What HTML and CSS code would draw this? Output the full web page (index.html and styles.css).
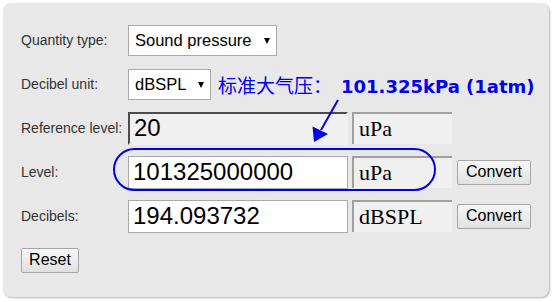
FILE: index.html
```html
<!DOCTYPE html>
<html lang="en">
<head>
    <meta charset="UTF-8">
    <meta name="viewport" content="width=device-width, initial-scale=1.0">
    <link rel="stylesheet" href="styles.css">
</head>
<body>

    <div class="panel">
        <div class="row">
            <label class="label">Quantity type:</label>
            <span class="select-wrap quantity"><select class="select"><option>Sound pressure</option></select></span>
        </div>
        <div class="row">
            <label class="label">Decibel unit:</label>
            <span class="select-wrap unit-select"><select class="select"><option>dBSPL</option></select></span>
            <span class="note">标准大气压：<b class="note-value">101.325kPa (1atm)</b></span>
        </div>
        <div class="row">
            <label class="label">Reference level:</label>
            <input class="field readonly" value="20" readonly>
            <span class="unit">uPa</span>
        </div>
        <div class="row">
            <label class="label">Level:</label>
            <input class="field" value="101325000000">
            <span class="unit">uPa</span>
            <button class="btn convert">Convert</button>
        </div>
        <div class="row">
            <label class="label">Decibels:</label>
            <input class="field" value="194.093732">
            <span class="unit">dBSPL</span>
            <button class="btn convert">Convert</button>
        </div>
        <div class="row">
            <button class="btn reset">Reset</button>
        </div>

        <!-- hand-drawn annotation on top of the form -->
        <svg class="annotation" viewBox="3 3 553 302" width="553" height="302">
            <rect x="117" y="152" width="321" height="41" rx="20.5" fill="none" stroke="#0000f0" stroke-width="2"/>
            <line x1="341" y1="103" x2="324" y2="133" stroke="#0000f0" stroke-width="2"/>
            <polygon points="317,145 315.5,129.5 331,137" fill="#0000f0"/>
        </svg>
    </div>

</body>
</html>
```

FILE: styles.css
```css
body {
    margin: 0;
    padding: 0;
    background-color: #fff;
    font-family: "Liberation Sans", Arial, sans-serif;
}

.panel {
    position: relative;
    margin: 3px;
    width: 546px;
    height: 294px;
    box-sizing: border-box;
    padding: 15px 0 0 18px;
    background-color: #e8e8e8;
    border-radius: 8px;
    box-shadow: 1px 1px 2px rgba(0, 0, 0, 0.3);
}

.row {
    display: flex;
    align-items: center;
    height: 44px;
}

.label {
    width: 107px;
    flex-shrink: 0;
    font-size: 14px;
    color: #333;
}

.select-wrap {
    position: relative;
    display: inline-block;
    height: 31px;
}

.select-wrap::after {
    content: "";
    position: absolute;
    right: 7px;
    top: 13px;
    border-left: 3.5px solid transparent;
    border-right: 3.5px solid transparent;
    border-top: 6px solid #000;
    pointer-events: none;
}

.select {
    -webkit-appearance: none;
    appearance: none;
    width: 100%;
    height: 31px;
    margin: 0;
    padding: 0 0 0 6px;
    border: 1px solid #a9a9a9;
    border-radius: 0;
    background-color: #fff;
    font-family: "Liberation Sans", Arial, sans-serif;
    font-size: 16.5px;
    color: #000;
}

.quantity {
    width: 149px;
}

.unit-select {
    width: 83px;
}

.note {
    margin-left: 7px;
    color: #0000f0;
    font-family: "Noto Sans CJK SC", sans-serif;
    font-size: 19px;
    white-space: nowrap;
}

.note-value {
    margin-left: 9px;
    font-family: "DejaVu Sans", Verdana, sans-serif;
    font-weight: bold;
    font-size: 18px;
}

.field {
    width: 220px;
    height: 33px;
    box-sizing: border-box;
    margin: 0;
    padding: 0 4px;
    border: 1px solid #a9a9a9;
    background-color: #fff;
    font-family: "Liberation Sans", Arial, sans-serif;
    font-size: 24px;
    color: #000;
}

.readonly {
    border: 2px inset #a0a0a0;
    border-right-color: #f0f0f0;
    border-bottom-color: #f0f0f0;
    background-color: #f0f0f0;
}

.unit {
    display: flex;
    align-items: center;
    width: 100px;
    height: 32px;
    box-sizing: border-box;
    margin-left: 4px;
    padding-left: 5px;
    border-top: 2px solid #a0a0a0;
    border-left: 2px solid #a0a0a0;
    background-color: #f0f0f0;
    font-family: "Liberation Serif", "Times New Roman", serif;
    font-size: 22px;
    color: #000;
}

.btn {
    height: 25px;
    margin: 0;
    padding: 0 6px;
    border: 1px solid #a6a6a6;
    border-radius: 2px;
    background: linear-gradient(#f7f7f7, #e1e1e1);
    font-family: "Liberation Sans", Arial, sans-serif;
    font-size: 16px;
    color: #000;
}

.convert {
    width: 74px;
    margin-left: 5px;
}

.reset {
    width: 58px;
}

.annotation {
    position: absolute;
    left: -3px;
    top: -3px;
    pointer-events: none;
}
```
